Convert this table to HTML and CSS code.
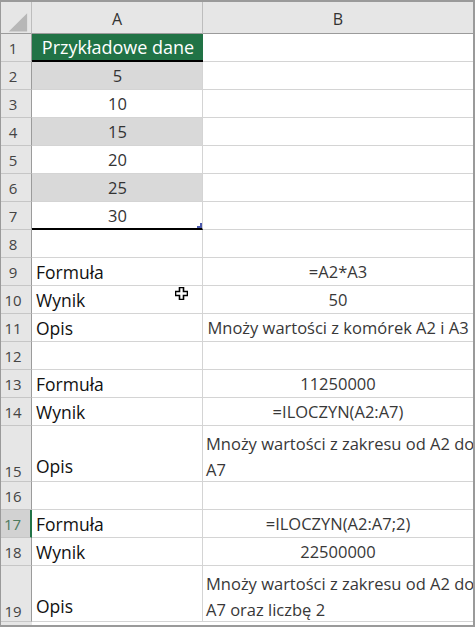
FILE: index.html
```html
<!DOCTYPE html>
<html lang="pl">
<head>
  <meta charset="UTF-8" />
  <title>ILOCZYN - przykład</title>
  <link rel="stylesheet" href="styles.css">
</head>
<body>

<div class="arkusz">

  <div class="wiersz naglowek">
    <div class="rog">
      <svg width="31" height="32" viewBox="0 0 31 32">
        <polygon points="8,30 27,11 27,30" fill="#b7b7b7" />
      </svg>
    </div>
    <div class="kol">A</div>
    <div class="kol ostatnia">B</div>
  </div>

  <div class="wiersz">
    <div class="nr">1</div>
    <div class="a tytul">Przykładowe dane</div>
    <div class="b"></div>
  </div>
  <div class="wiersz">
    <div class="nr">2</div>
    <div class="a liczba szary">5</div>
    <div class="b"></div>
  </div>
  <div class="wiersz">
    <div class="nr">3</div>
    <div class="a liczba">10</div>
    <div class="b"></div>
  </div>
  <div class="wiersz">
    <div class="nr">4</div>
    <div class="a liczba szary">15</div>
    <div class="b"></div>
  </div>
  <div class="wiersz">
    <div class="nr">5</div>
    <div class="a liczba">20</div>
    <div class="b"></div>
  </div>
  <div class="wiersz">
    <div class="nr">6</div>
    <div class="a liczba szary">25</div>
    <div class="b"></div>
  </div>
  <div class="wiersz">
    <div class="nr">7</div>
    <div class="a liczba koniec">30
      <svg class="uchwyt" width="6" height="6" viewBox="0 0 6 6">
        <polygon points="3,0 6,0 6,6 0,6 0,3 3,3" fill="#4b59ad" />
      </svg>
    </div>
    <div class="b"></div>
  </div>
  <div class="wiersz">
    <div class="nr">8</div>
    <div class="a"></div>
    <div class="b"></div>
  </div>

  <div class="wiersz">
    <div class="nr">9</div>
    <div class="a">Formuła</div>
    <div class="b srodek">=A2*A3</div>
  </div>
  <div class="wiersz">
    <div class="nr">10</div>
    <div class="a">Wynik</div>
    <div class="b srodek">50</div>
  </div>
  <div class="wiersz">
    <div class="nr">11</div>
    <div class="a">Opis</div>
    <div class="b srodek">Mnoży wartości z komórek A2 i A3</div>
  </div>
  <div class="wiersz">
    <div class="nr">12</div>
    <div class="a"></div>
    <div class="b"></div>
  </div>

  <div class="wiersz">
    <div class="nr">13</div>
    <div class="a">Formuła</div>
    <div class="b srodek">11250000</div>
  </div>
  <div class="wiersz">
    <div class="nr">14</div>
    <div class="a">Wynik</div>
    <div class="b srodek">=ILOCZYN(A2:A7)</div>
  </div>
  <div class="wiersz wysoki">
    <div class="nr">15</div>
    <div class="a">Opis</div>
    <div class="b">Mnoży wartości z zakresu od A2 do<br>A7</div>
  </div>
  <div class="wiersz">
    <div class="nr">16</div>
    <div class="a"></div>
    <div class="b"></div>
  </div>

  <div class="wiersz">
    <div class="nr wybrany">17</div>
    <div class="a">Formuła</div>
    <div class="b srodek">=ILOCZYN(A2:A7;2)</div>
  </div>
  <div class="wiersz">
    <div class="nr">18</div>
    <div class="a">Wynik</div>
    <div class="b srodek">22500000</div>
  </div>
  <div class="wiersz wysoki">
    <div class="nr">19</div>
    <div class="a">Opis</div>
    <div class="b">Mnoży wartości z zakresu od A2 do<br>A7 oraz liczbę 2</div>
  </div>

  <svg class="kursor" width="13" height="13" viewBox="0 0 13 13">
    <polygon points="4.5,0.5 8.5,0.5 8.5,4.5 12.5,4.5 12.5,8.5 8.5,8.5 8.5,12.5 4.5,12.5 4.5,8.5 0.5,8.5 0.5,4.5 4.5,4.5" fill="#fff" stroke="#000" stroke-width="1.6" />
  </svg>

</div>

</body>
</html>
```

FILE: styles.css
```css
body {
  margin: 0;
  background-color: #fff;
  font-family: "Open Sans", "Noto Sans", sans-serif;
}
.arkusz {
  position: relative;
  width: 475px;
  height: 627px;
  box-sizing: border-box;
  border-top: 2px solid #9a9a9a;
  border-left: 1px solid #9a9a9a;
  border-right: 2px solid #9a9a9a;
  border-bottom: 2px solid #9a9a9a;
  overflow: hidden;
  background: linear-gradient(to right, #e6e6e6 31px, #fff 31px);
}
.wiersz {
  display: grid;
  grid-template-columns: 31px 171px 270px;
  height: 28px;
}
.wiersz.wysoki {
  height: 56px;
}
.wiersz.naglowek {
  height: 32px;
}
.wiersz > div {
  box-sizing: border-box;
  display: flex;
  align-items: center;
  white-space: nowrap;
  overflow: hidden;
}
.rog {
  background-color: #e6e6e6;
  border-right: 1px solid #bdbdbd;
  border-bottom: 1px solid #9b9b9b;
}
.kol {
  justify-content: center;
  background-color: #e6e6e6;
  border-right: 1px solid #bdbdbd;
  border-bottom: 1px solid #9b9b9b;
  font-size: 16px;
  color: #333;
  padding-top: 2px;
}
.kol.ostatnia {
  border-right: none;
}
.nr {
  justify-content: center;
  padding-right: 6px;
  background-color: #e6e6e6;
  border-right: 1px solid #9b9b9b;
  border-bottom: 1px solid #c6c6c6;
  font-size: 15px;
  color: #444;
}
.nr.wybrany {
  background-color: #d2d2d2;
  color: #4d7a5e;
  border-right: 2px solid #217346;
}
.wysoki > div {
  align-items: flex-end;
}
.a {
  border-right: 1px solid #d4d4d4;
  border-bottom: 1px solid #d4d4d4;
  padding: 0 3px 0 4px;
  font-size: 17.5px;
  color: #111;
}
.wysoki .a {
  padding-bottom: 3px;
}
.a.liczba {
  justify-content: center;
  font-size: 16.5px;
  color: #333;
}
.a.szary {
  background-color: #d9d9d9;
}
.a.tytul {
  justify-content: center;
  background-color: #217346;
  color: #fff;
  font-size: 18px;
  border-right: none;
  border-bottom: 2px solid #000;
}
.a.koniec {
  position: relative;
  border-bottom: 2px solid #000;
}
.uchwyt {
  position: absolute;
  right: -1px;
  bottom: -1px;
}
.b {
  border-bottom: 1px solid #d4d4d4;
  padding: 0 0 0 3px;
  font-size: 16.5px;
  color: #383838;
}
.b.srodek {
  justify-content: center;
  padding: 0;
}
.wysoki .b {
  display: block;
  padding-top: 5px;
  line-height: 26px;
}
.kursor {
  position: absolute;
  left: 174px;
  top: 285px;
}
```
